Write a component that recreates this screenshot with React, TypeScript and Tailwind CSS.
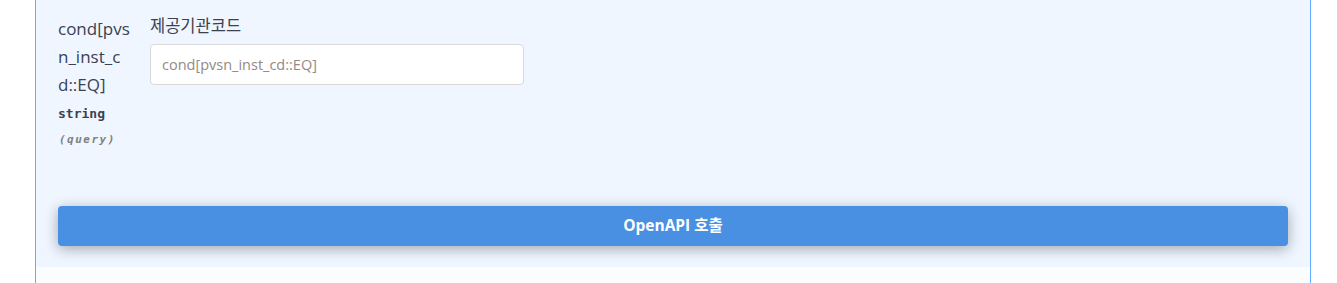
export default function App() {
  return (
    <div className="w-[1337px] h-[283px] bg-white overflow-hidden flex" style={{ fontFamily: '"Open Sans", "Noto Sans CJK KR", sans-serif' }}>
      <div className="ml-[35px] w-[1276px] h-full border-l border-r border-[#61affe] flex flex-col">
        <div className="bg-[#eff6ff] flex flex-col">
          <div className="flex pl-[22px] pt-[15px]">
            <div className="w-[92px] flex flex-col">
              <div className="w-[80px] break-all text-[17px] leading-[28px] text-[#3b4151]">cond[pvsn_inst_cd::EQ]</div>
              <div className="mt-[7px] text-[13px] leading-[16px] font-bold text-[#3b4151]" style={{ fontFamily: '"DejaVu Sans Mono", monospace' }}>string</div>
              <div className="mt-[10px] ml-[1px] text-[11px] leading-[16px] tracking-[1.5px] italic font-semibold text-[#808080]" style={{ fontFamily: '"DejaVu Sans Mono", monospace' }}>(query)</div>
            </div>
            <div className="flex flex-col">
              <div className="text-[16.5px] leading-[22px] text-[#3b4151]">제공기관코드</div>
              <input
                className="mt-[7px] w-[374px] h-[41px] bg-white border border-[#d9d9d9] rounded-[4px] px-[11px] text-[14.5px] text-[#3b4151] placeholder:text-[#948a85] outline-none"
                placeholder="cond[pvsn_inst_cd::EQ]"
              />
            </div>
          </div>
          <div className="px-[22px] pt-[58px] pb-[21px]">
            <button className="w-[1230px] h-[40px] bg-[#4990e2] rounded-[4px] text-white text-[15.5px] font-bold shadow-[0_3px_14px_rgba(0,0,0,0.32)]">
              OpenAPI 호출
            </button>
          </div>
        </div>
        <div className="flex-1 bg-[#fafcfe]" />
      </div>
    </div>
  );
}
